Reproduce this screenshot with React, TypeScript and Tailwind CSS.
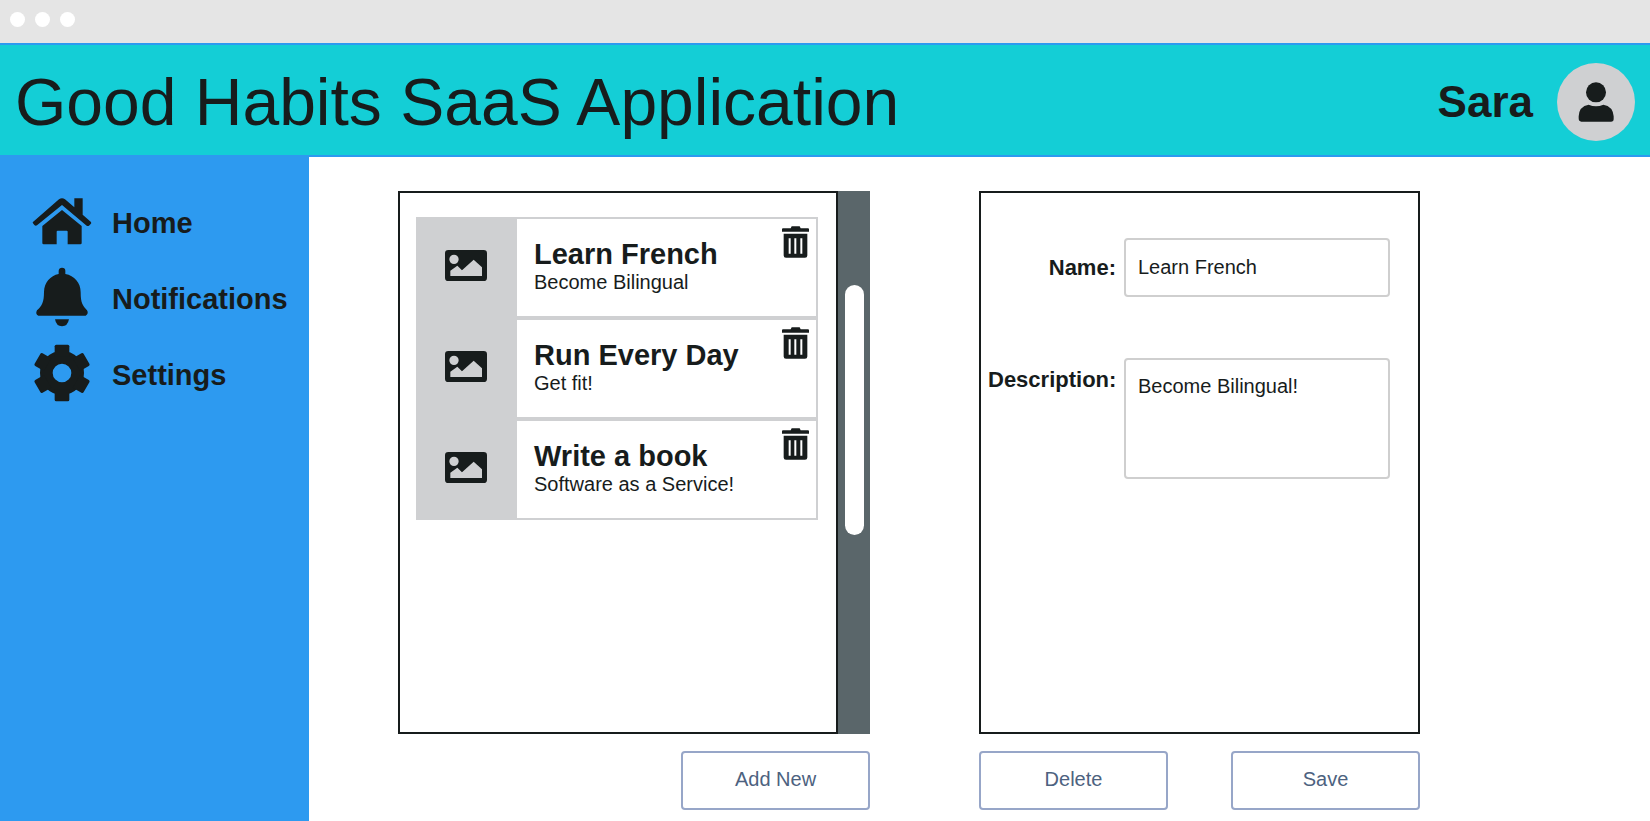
import type { ReactNode } from 'react';

type IconProps = { className?: string };

function HomeIcon({ className }: IconProps) {
  return (
    <svg viewBox="97 50 180 144" className={className} fill="currentColor" aria-hidden="true">
      <path d="M99 126L178 57Q187 50 196 57L224 81V54H249V103L274 125Q276 129 273 131L268 136Q264 138 261 136L187 74L112 135Q108 138 104 134L100 129Z" />
      <path d="M187 89L246 137V188Q246 192 242 192H204V154Q204 151 201 151H174Q171 151 171 154V192H132Q128 192 128 188V137Z" />
    </svg>
  );
}

function BellIcon({ className }: IconProps) {
  return (
    <svg viewBox="97 260 180 180" className={className} fill="currentColor" aria-hidden="true">
      <path d="M177 281V271Q178 262 187 262Q197 262 197 271V281C224 286 243 307 243 336C243 368 249 376 262 390Q268 400 258 406H116Q106 402 112 390C127 376 133 366 133 335C134 306 152 286 177 281Z" />
      <path d="M166 417H208Q204 438 187 438Q170 438 166 417Z" />
    </svg>
  );
}

function GearIcon({ className }: IconProps) {
  return (
    <svg viewBox="97 490 180 180" className={className} aria-hidden="true">
      <circle cx="187" cy="580" r="47" fill="none" stroke="currentColor" strokeWidth="38" />
      {[0, 60, 120, 180, 240, 300].map((angle) => (
        <path
          key={angle}
          d="M165 530V500Q165 495 170 495H204Q209 495 209 500V530Z"
          fill="currentColor"
          transform={`rotate(${angle} 187 580)`}
        />
      ))}
    </svg>
  );
}

function UserIcon({ className }: IconProps) {
  return (
    <svg viewBox="534 159 108 120" className={className} fill="currentColor" aria-hidden="true">
      <circle cx="588" cy="190" r="30" />
      <path d="M536 268V262Q537 232 566 227Q588 237 610 227Q639 232 641 262V270Q641 278 633 278H544Q536 278 536 268Z" />
    </svg>
  );
}

function PictureIcon({ className }: IconProps) {
  return (
    <svg viewBox="165 210 126 93" className={className} aria-hidden="true">
      <path
        fill="currentColor"
        fillRule="evenodd"
        d="M175 210H281Q291 210 291 220V293Q291 303 281 303H175Q165 303 165 293V220Q165 210 175 210ZM206 238A14 14 0 1 0 178 238A14 14 0 1 0 206 238ZM181 288H276V262L251 239L216 271L202 257L181 272Z"
      />
    </svg>
  );
}

function TrashIcon({ className }: IconProps) {
  return (
    <svg viewBox="427 145 81 95" className={className} aria-hidden="true">
      <path
        fill="currentColor"
        fillRule="evenodd"
        d="M456 145H480L483 151H505Q508 151 508 154V162H427V154Q427 151 430 151H453ZM432 168H503V233Q503 240 496 240H439Q432 240 432 233ZM447 181V228H453V181ZM464 181V228H470V181ZM482 181V228H488V181Z"
      />
    </svg>
  );
}

const navItems = [
  { label: 'Home', icon: <HomeIcon className="h-12 w-[60px]" /> },
  { label: 'Notifications', icon: <BellIcon className="h-[60px] w-[60px]" /> },
  { label: 'Settings', icon: <GearIcon className="h-[60px] w-[60px]" /> },
];

const habits = [
  { name: 'Learn French', detail: 'Become Bilingual' },
  { name: 'Run Every Day', detail: 'Get fit!' },
  { name: 'Write a book', detail: 'Software as a Service!' },
];

function ActionButton({ children }: { children: ReactNode }) {
  return (
    <button
      type="button"
      className="h-[59px] w-[189px] rounded border-2 border-[#97a6c8] bg-white pb-1 text-[20px] text-[#4d6280]"
    >
      {children}
    </button>
  );
}

function HabitCard({ name, detail }: { name: string; detail: string }) {
  return (
    <li className="flex h-[101px] border-2 border-[#cfd0d2]">
      <div className="flex w-[99px] shrink-0 items-center justify-center bg-[#cfd0d2] pr-1 pb-1">
        <PictureIcon className="h-[31px] w-[42px]" />
      </div>
      <div className="flex-1 pt-[19px] pl-[17px]">
        <h2 className="text-[29px] leading-8 font-bold">{name}</h2>
        <p className="text-[20px] leading-6">{detail}</p>
      </div>
      <button type="button" aria-label={`Delete ${name}`} className="self-start pt-[7px] pr-[7px]">
        <TrashIcon className="h-8 w-[27px]" />
      </button>
    </li>
  );
}

export default function App() {
  return (
    <div className="flex min-h-screen flex-col bg-white font-['Liberation_Sans',Arial,sans-serif] text-[#171c1c]">
      <div className="flex h-[43px] items-center gap-2.5 bg-[#e5e5e5] pb-1 pl-2.5">
        <span className="size-[15px] rounded-full bg-white" />
        <span className="size-[15px] rounded-full bg-white" />
        <span className="size-[15px] rounded-full bg-white" />
      </div>

      <header className="flex h-[114px] items-center justify-between border-y-2 border-[#2d9af0] bg-[#14ced6] pt-1 pr-[15px] pl-[15px]">
        <h1 className="text-[66px] leading-[72px]">Good Habits SaaS Application</h1>
        <div className="flex items-center gap-6">
          <span className="text-[44px] leading-[48px] font-bold">Sara</span>
          <span className="flex size-[78px] items-center justify-center rounded-full bg-[#cfd0d2]">
            <UserIcon className="h-10 w-9" />
          </span>
        </div>
      </header>

      <div className="flex flex-1">
        <nav className="w-[309px] shrink-0 bg-[#2d9af0] pt-[26px] pl-8">
          <ul>
            {navItems.map((item) => (
              <li key={item.label}>
                <a href="#" className="flex h-[76px] items-center gap-5 text-[29px] font-bold">
                  {item.icon}
                  <span className="pt-1.5">{item.label}</span>
                </a>
              </li>
            ))}
          </ul>
        </nav>

        <main className="flex flex-1 gap-[109px] pt-[34px] pr-[230px] pb-[11px] pl-[89px]">
          <section className="flex flex-[472] flex-col gap-[17px]">
            <div className="flex flex-1">
              <div className="flex-1 border-2 border-[#171c1c] pt-6 pr-[18px] pl-4">
                <ul>
                  {habits.map((habit) => (
                    <HabitCard key={habit.name} {...habit} />
                  ))}
                </ul>
              </div>
              <div className="flex w-8 justify-center bg-[#5a666a] pt-[94px]">
                <div className="h-[250px] w-[19px] rounded-full bg-white" />
              </div>
            </div>
            <div className="flex justify-end">
              <ActionButton>Add New</ActionButton>
            </div>
          </section>

          <section className="flex flex-[441] flex-col gap-[17px]">
            <form className="grid flex-1 grid-cols-[128px_1fr] content-start gap-x-2 gap-y-[61px] border-2 border-[#171c1c] pt-[45px] pr-7 pl-[7px]">
              <label htmlFor="habit-name" className="self-center text-right text-[22px] leading-6 font-bold">
                Name:
              </label>
              <input
                id="habit-name"
                type="text"
                defaultValue="Learn French"
                className="h-[59px] w-full min-w-0 rounded border-2 border-[#cfcfcf] px-3 text-[20px]"
              />
              <label htmlFor="habit-description" className="pt-2.5 text-right text-[22px] leading-6 font-bold">
                Description:
              </label>
              <textarea
                id="habit-description"
                defaultValue="Become Bilingual!"
                className="h-[121px] w-full min-w-0 resize-none rounded border-2 border-[#cfcfcf] px-3 py-[14px] text-[20px] leading-6"
              />
            </form>
            <div className="flex justify-between">
              <ActionButton>Delete</ActionButton>
              <ActionButton>Save</ActionButton>
            </div>
          </section>
        </main>
      </div>
    </div>
  );
}
